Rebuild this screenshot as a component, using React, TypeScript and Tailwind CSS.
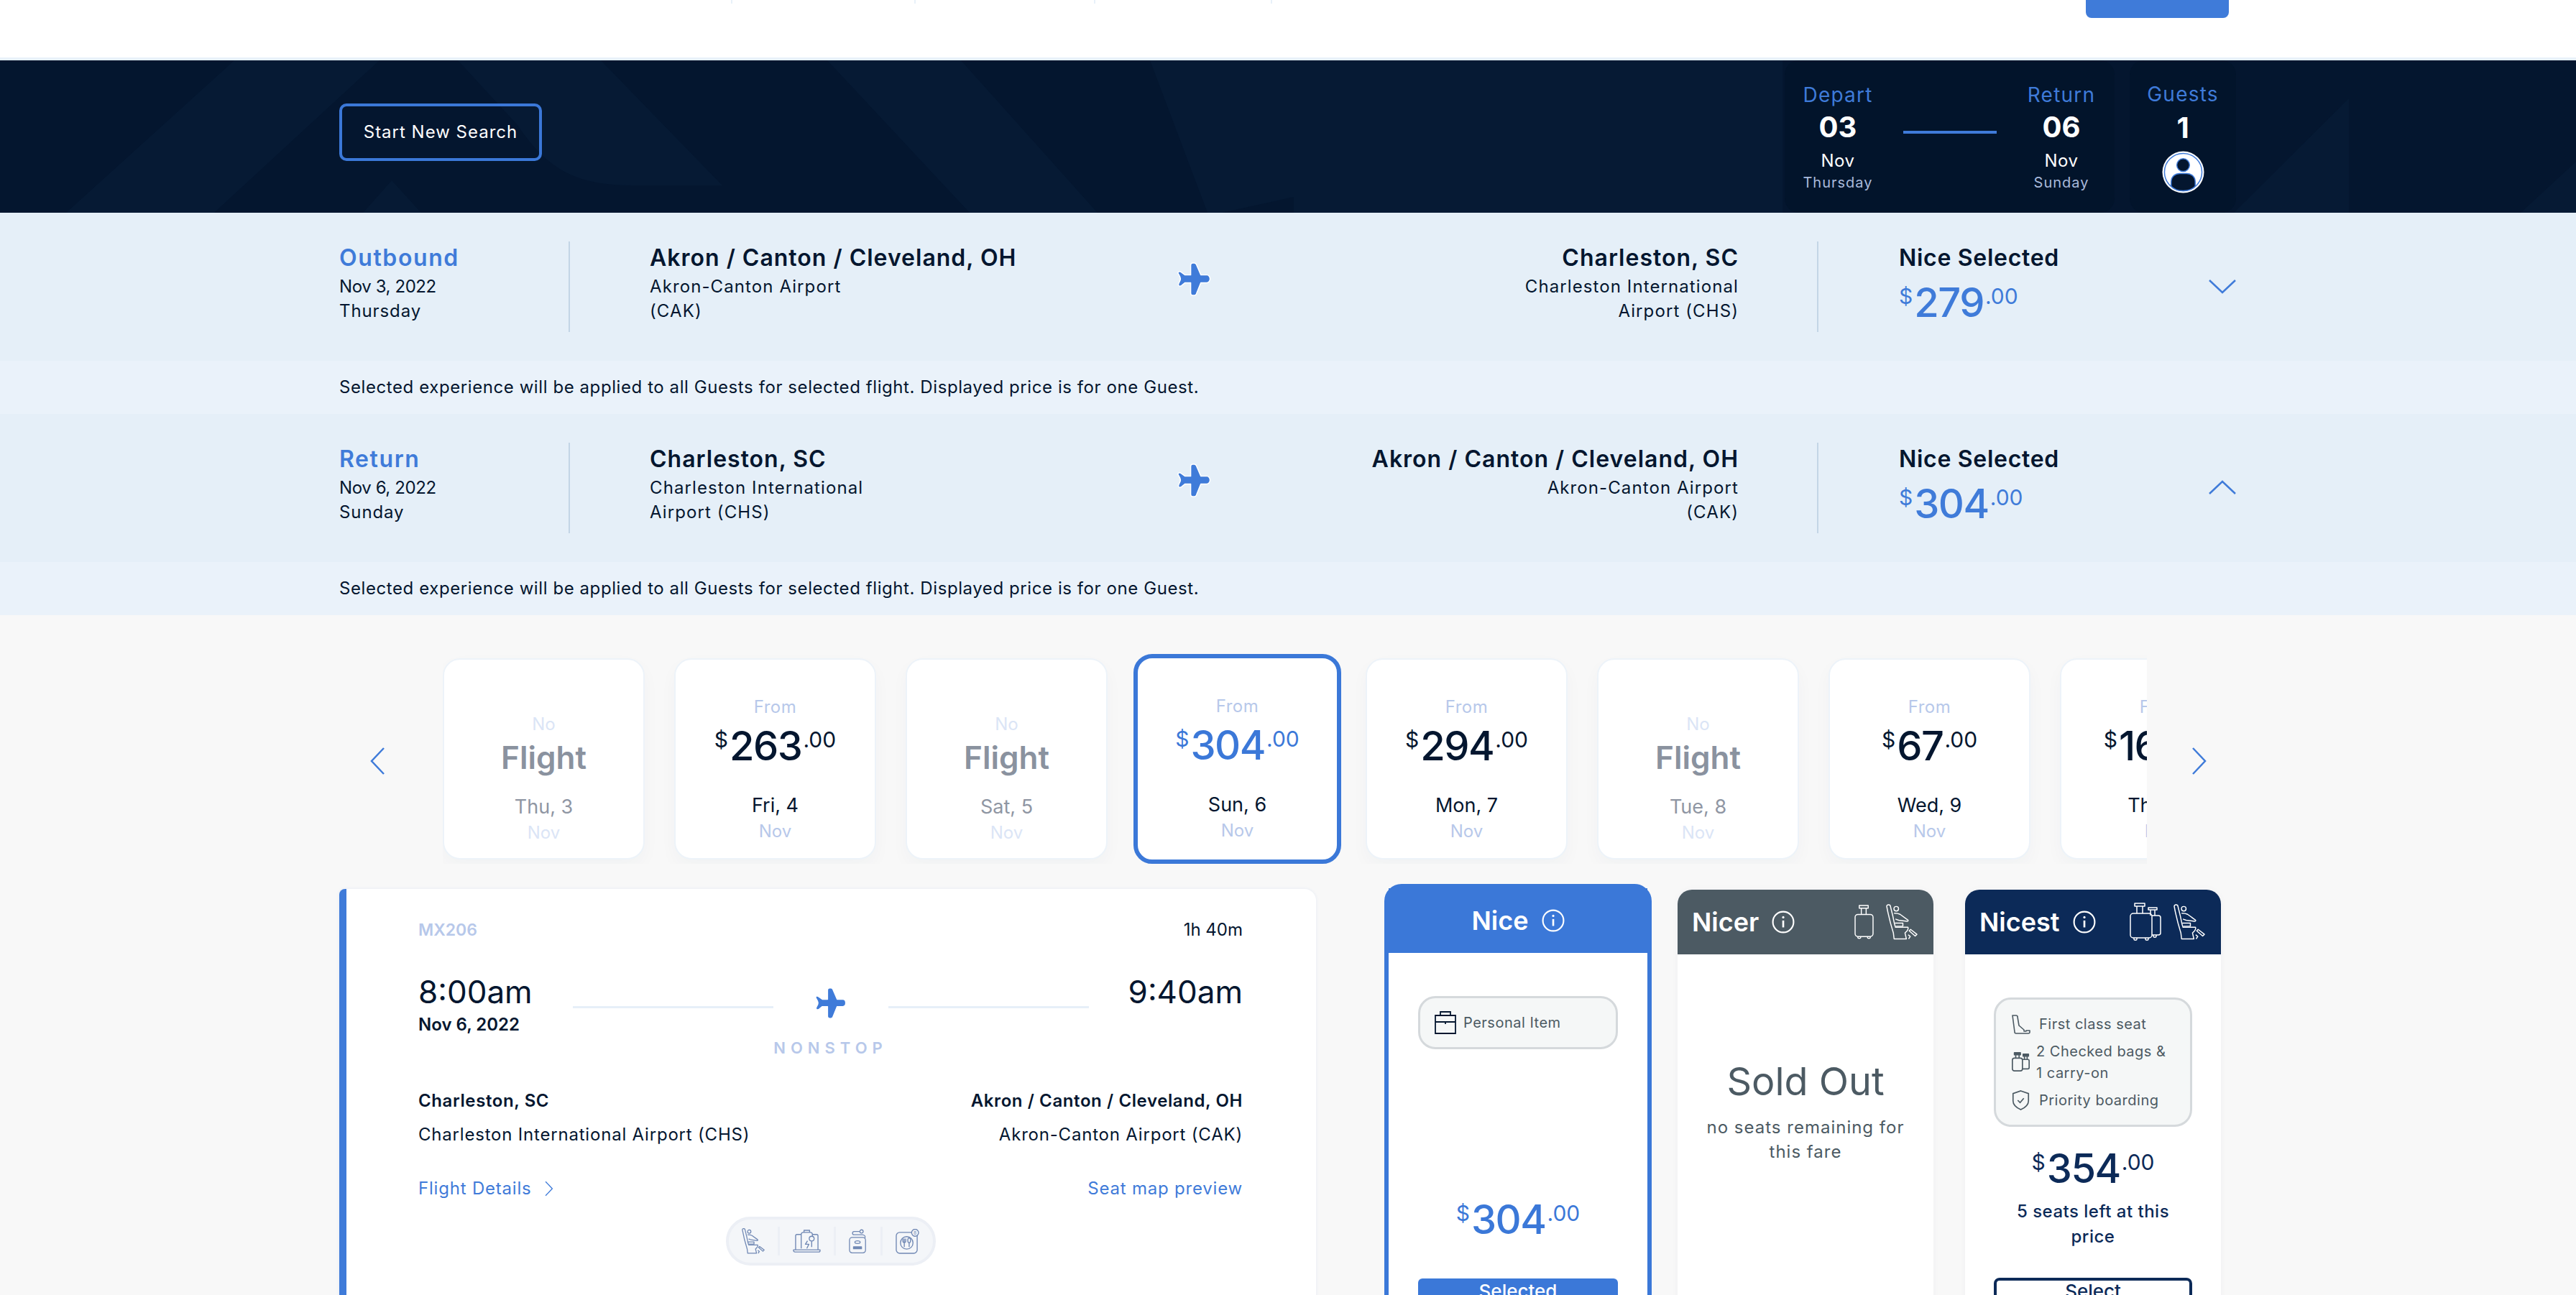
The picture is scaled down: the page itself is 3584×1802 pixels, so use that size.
import React from 'react';

const Plane = ({ className }: { className?: string }) => (
  <svg viewBox="-1 -1 48 48" className={className} fill="#3f7bd9" stroke="#fff" strokeWidth="1.500" strokeLinejoin="round">
    <path d="M18 3c0-2 1-3 3-3h2c1.500 0 2.500 1 3 2l6.500 15H41c2.500 0 4.500 2.500 4.500 5.500S43.500 28 41 28h-8.500L26 44c-.5 1-1.500 2-3 2h-2c-2 0-3-1-3-3V28h-8l-5 4c-2 1.500-4.500 1-4.500-1 0-3 3-5 3-8.500S0 16 0 14c0-2 2.500-2.500 4.500-1l5.500 4h8z" />
  </svg>
);

const Chevron = ({ dir, className }: { dir: 'left' | 'right' | 'up' | 'down'; className?: string }) => {
  const d = {
    left: 'M20 1 3 19l17 18',
    right: 'M2 1l17 18L2 37',
    up: 'M1 19 19 2l18 17',
    down: 'M1 2l18 17L37 2',
  }[dir];
  const box = dir === 'left' || dir === 'right' ? '0 0 22 38' : '0 0 38 21';
  return (
    <svg viewBox={box} className={className} fill="none" stroke="#3f7bd9" strokeWidth="2.500">
      <path d={d} />
    </svg>
  );
};

const Info = ({ className }: { className?: string }) => (
  <svg viewBox="0 0 30 30" className={className} fill="none" stroke="#fff" strokeWidth="2">
    <circle cx="15" cy="15" r="13.500" />
    <path d="M15 13v9" strokeWidth="2.500" />
    <circle cx="15" cy="8.800" r="1.500" fill="#fff" stroke="none" />
  </svg>
);

const Seat = ({ className, stroke = '#fff', width = 1.5 }: { className?: string; stroke?: string; width?: number }) => (
  <svg viewBox="0 0 45 51" className={className} fill="none" stroke={stroke} strokeWidth={width} strokeLinejoin="round" strokeLinecap="round">
    <path d="M1 3C1 1 4.500 0 6 2l3.500 14L12 28l1.500 5H31c1 0 .5 3-1 5l-3 3 2 8.500H11.500L10.500 41C7 30 3 14 1 3z" />
    <circle cx="14.600" cy="6.700" r="3.300" />
    <path d="M12 13c3 0 6 .5 8 1.500l11 8c1 1 .5 2-1 2l-12-1.500-4-1.500" />
    <path d="M13 27h11v4.500H14.500M35 36l9 7-2.500 2.500-8.500-7.500zM32 44l2.500 2-2 3" />
  </svg>
);

const Bag = ({ className }: { className?: string }) => (
  <svg viewBox="0 0 28 50" className={className} fill="none" stroke="#fff" strokeWidth="1.500" strokeLinejoin="round">
    <path d="M7 1h13v4H7zM10 5v9M17 5v9" />
    <rect x="1" y="14" width="26" height="32" rx="4" />
    <path d="M5 46v2c0 1 4 1 4 0v-2M19 46v2c0 1 4 1 4 0v-2" />
  </svg>
);

const TwoBags = ({ className }: { className?: string }) => (
  <svg viewBox="0 0 44 54" className={className} fill="none" stroke="#fff" strokeWidth="1.500" strokeLinejoin="round">
    <path d="M7 1h14v4H7zM10 5v10M18 5v10" />
    <rect x="1" y="15" width="30" height="34" rx="4" />
    <path d="M6 49v2c0 1.500 4 1.500 4 0v-2M22 49v2c0 1.500 4 1.500 4 0v-2" />
    <path d="M26 7h12v3H26zM29 10v8M35 10v8M31 18h9a3 3 0 0 1 3 3v21a3 3 0 0 1-3 3h-9M33 45v2c0 1.500 4 1.500 4 0v-2" />
  </svg>
);

const Money = ({ whole, className }: { whole: string; className: string }) => (
  <span className={`flex items-start justify-center whitespace-nowrap ${className}`}>
    <span className="text-[30px] leading-none mt-[6px]">$</span>
    <span className="text-[56px] leading-[60px] font-medium tracking-[-1.5px] mx-[2px]">{whole}</span>
    <span className="text-[30px] leading-none mt-[6px]">.00</span>
  </span>
);

const FlightRow = ({
  label, date, day, from, fromAirport, fromAirport2, to, toAirport, toAirport2, price, open,
}: {
  label: string; date: string; day: string; from: string; fromAirport: string; fromAirport2: string;
  to: string; toAirport: string; toAirport2: string; price: string; open: boolean;
}) => (
  <>
    <div className="bg-[#e5eff8] h-[206px] pl-[472px] pr-[473px] pt-[40px] flex items-start text-[#04162f]">
      <div className="w-[321px] h-[126px] border-r-2 border-[#c3d5e6]">
        <div className="text-[32px] leading-[46px] font-semibold text-[#3f7bd9] tracking-[1.6px]">{label}</div>
        <div className="text-[24px] leading-[34px] tracking-[-0.4px]">{date}</div>
        <div className="text-[24px] leading-[34px] tracking-[0.9px]">{day}</div>
      </div>
      <div className="w-[1737px] h-[126px] pl-[111px] pr-[109px] border-r-2 border-[#c3d5e6] flex justify-between items-start">
        <div className="w-[600px]">
          <div className="text-[32px] leading-[46px] font-semibold tracking-[1px]">{from}</div>
          <div className="text-[24px] leading-[34px] tracking-[1.100px]">{fromAirport}</div>
          <div className="text-[24px] leading-[34px] tracking-[1.100px]">{fromAirport2}</div>
        </div>
        <Plane className="w-[47px] h-[47px] mt-[29px] shrink-0" />
        <div className="w-[600px] text-right">
          <div className="text-[32px] leading-[46px] font-semibold tracking-[1px]">{to}</div>
          <div className="text-[24px] leading-[34px] tracking-[1.100px]">{toAirport}</div>
          <div className="text-[24px] leading-[34px] tracking-[1.100px]">{toAirport2}</div>
        </div>
      </div>
      <div className="flex-1 pl-[112px] flex justify-between items-start">
        <div>
          <div className="text-[32px] leading-[46px] font-semibold tracking-[0.7px]">Nice Selected</div>
          <Money whole={price} className="text-[#3f7bd9] w-fit mt-[9px]" />
        </div>
        <Chevron dir={open ? 'up' : 'down'} className="w-[38px] h-[21px] mt-[52px]" />
      </div>
    </div>
    <div className="bg-[#eaf2fa] h-[74px] pl-[472px] flex items-center text-[24px] text-[#04162f] tracking-[0.58px]">
      Selected experience will be applied to all Guests for selected flight. Displayed price is for one Guest.
    </div>
  </>
);

const dateCard = 'w-[281px] h-[280px] shrink-0 bg-white rounded-[24px] border-2 border-[#edf3f9] shadow-[0_10px_24px_rgba(30,50,90,0.03)] flex flex-col items-center';

const NoFlight = ({ day }: { day: string }) => (
  <div className={dateCard}>
    <div className="mt-[76px] text-[24px] leading-[28px] text-[#dbe5f6]">No</div>
    <div className="text-[44px] leading-[64px] font-semibold text-[#8a929f]">Flight</div>
    <div className="mt-[19px] text-[27px] leading-[36px] text-[#8f96a3]">{day}</div>
    <div className="mt-[4px] text-[24px] leading-[28px] text-[#dbe5f6]">Nov</div>
  </div>
);

const PriceCard = ({ whole, day }: { whole: string; day: string }) => (
  <div className={dateCard}>
    <div className="mt-[52px] text-[24px] leading-[28px] tracking-[0.5px] text-[#b7c8ea]">From</div>
    <Money whole={whole} className="text-[#04162f] mt-[10px]" />
    <div className="mt-[35px] text-[27px] leading-[36px] text-[#04162f] whitespace-nowrap">{day}</div>
    <div className="mt-[4px] text-[24px] leading-[28px] text-[#b7c8ea]">Nov</div>
  </div>
);

const FareHeader = ({ name, bg, children }: { name: string; bg: string; children: React.ReactNode }) => (
  <div className={`h-[90px] rounded-t-[20px] pl-[20px] pr-[22px] flex items-center justify-between ${bg}`}>
    <div className="flex items-center gap-[18px] text-[36px] font-semibold text-white">
      {name}
      <Info className="w-[32px] h-[32px]" />
    </div>
    <div className="flex items-center gap-[17px]">{children}</div>
  </div>
);

export default function App() {
  return (
    <div className="w-[3584px] h-[1802px] overflow-hidden bg-[#f8f8f8] font-['Inter',sans-serif] text-[#04162f]">
      {/* top nav, scrolled almost out of view */}
      <div className="h-[80px] bg-white flex items-start pl-[1017px]">
        <div className="w-[255px] h-[5px] border-l-2 border-[#e8f1f9]" />
        <div className="w-[250px] h-[5px] border-l-2 border-[#e8f1f9]" />
        <div className="w-[246px] h-[5px] border-l-2 border-[#e8f1f9]" />
        <div className="w-[2px] h-[5px] bg-[#e8f1f9]" />
        <div className="ml-[1132px] w-[199px] h-[25px] bg-[#3f7bd9] rounded-b-[8px]" />
      </div>
      <div className="h-[4px] bg-[#e8f1f9]" />

      {/* navy search summary */}
      <div className="relative h-[212px] bg-[#04162f] pl-[472px] pr-[473px] flex items-center justify-between overflow-hidden">
        <svg className="absolute inset-0 w-full h-full" viewBox="0 0 3584 212" preserveAspectRatio="none" fill="#061a34">
          <path d="M326 0h202L298 212H92zM505 212l40-45 41 45zM637 0h199l169 174H880C800 174 760 150 720 90zM1151 0h186l190 212h-178zM1600 0h200v190l-100 22h-20zM1800 0h680v212h-680zM3108 212 3268 53v159zM3507 212l77-71v71z" />
        </svg>
        <button className="relative w-[282px] h-[80px] mb-[12px] border-4 border-[#3b78d8] rounded-[10px] text-white text-[24px] tracking-[1px]">
          Start New Search
        </button>
        <div className="relative flex gap-[21px] h-full">
          <div className="w-[459px] bg-[#02142b] rounded-[20px] px-[24px] flex items-center justify-between">
            <div className="w-[100px] flex flex-col items-center">
              <span className="text-[28px] leading-[40px] text-[#3f7bd9] tracking-[1.2px]">Depart</span>
              <span className="text-[40px] leading-[50px] font-bold text-white">03</span>
              <span className="mt-[6px] text-[24px] leading-[32px] text-white tracking-[0.5px]">Nov</span>
              <span className="text-[20px] leading-[28px] text-[#a9badb] tracking-[1px]">Thursday</span>
            </div>
            <div className="w-[130px] h-[4px] bg-[#3f7bd9] mb-[12px]" />
            <div className="w-[100px] flex flex-col items-center">
              <span className="text-[28px] leading-[40px] text-[#3f7bd9] tracking-[1.2px]">Return</span>
              <span className="text-[40px] leading-[50px] font-bold text-white">06</span>
              <span className="mt-[6px] text-[24px] leading-[32px] text-white tracking-[0.5px]">Nov</span>
              <span className="text-[20px] leading-[28px] text-[#a9badb] tracking-[1px]">Sunday</span>
            </div>
          </div>
          <div className="w-[148px] bg-[#02142b] rounded-[20px] flex flex-col items-center pt-[27px]">
            <span className="text-[28px] leading-[40px] text-[#3f7bd9] tracking-[1.2px]">Guests</span>
            <span className="mt-[2px] text-[40px] leading-[50px] font-bold text-white">1</span>
            <svg viewBox="0 0 60 60" className="w-[59px] h-[59px] mt-[7px]">
              <circle cx="30" cy="30" r="29.500" fill="#fff" />
              <circle cx="30" cy="30" r="26.500" fill="#fff" stroke="#3f7bd9" strokeWidth="1.500" />
              <circle cx="30" cy="20" r="9" fill="#04162f" stroke="#3f7bd9" strokeWidth="1.500" />
              <path d="M13 50V44c0-8 6-12 12-12h10c6 0 12 4 12 12v6c-5 5-11 6.500-17 6.500S18 55 13 50z" fill="#04162f" stroke="#3f7bd9" strokeWidth="1.500" />
            </svg>
          </div>
        </div>
      </div>

      <FlightRow
        label="Outbound" date="Nov 3, 2022" day="Thursday"
        from="Akron / Canton / Cleveland, OH" fromAirport="Akron-Canton Airport" fromAirport2="(CAK)"
        to="Charleston, SC" toAirport="Charleston International" toAirport2="Airport (CHS)"
        price="279" open={false}
      />
      <FlightRow
        label="Return" date="Nov 6, 2022" day="Sunday"
        from="Charleston, SC" fromAirport="Charleston International" fromAirport2="Airport (CHS)"
        to="Akron / Canton / Cleveland, OH" toAirport="Akron-Canton Airport" toAirport2="(CAK)"
        price="304" open
      />

      {/* date carousel */}
      <div className="pl-[514px] pt-[54px] flex items-center h-[346px]">
        <Chevron dir="left" className="w-[22px] h-[38px] mt-[6px] shrink-0" />
        <div className="ml-[80px] w-[2371px] h-[292px] overflow-hidden flex items-center gap-[41px]">
          <NoFlight day="Thu, 3" />
          <PriceCard whole="263" day="Fri, 4" />
          <NoFlight day="Sat, 5" />
          <div className="w-[289px] h-[292px] shrink-0 -ml-[5px] -mr-[7px] bg-white rounded-[26px] border-[6px] border-[#3b78d8] flex flex-col items-center">
            <div className="mt-[53px] text-[24px] leading-[28px] tracking-[0.5px] text-[#b7c8ea]">From</div>
            <Money whole="304" className="text-[#3b78d8] mt-[10px]" />
            <div className="mt-[35px] text-[27px] leading-[36px]">Sun, 6</div>
            <div className="mt-[4px] text-[24px] leading-[28px] text-[#b7c8ea]">Nov</div>
          </div>
          <PriceCard whole="294" day="Mon, 7" />
          <NoFlight day="Tue, 8" />
          <PriceCard whole="67" day="Wed, 9" />
          <PriceCard whole="164" day="Thu, 10" />
        </div>
        <Chevron dir="right" className="w-[22px] h-[38px] mt-[6px] ml-[62px] shrink-0" />
      </div>

      {/* flight card + fares */}
      <div className="pl-[472px] mt-[28px] flex items-start">
        <div className="w-[1359px] h-[600px] mt-[7px] bg-white border-l-[10px] border-[#3f7bd9] rounded-tl-[8px] rounded-tr-[16px] shadow-[0_0_4px_rgba(60,120,210,0.10)] pl-[100px] pr-[102px] pt-[42px]">
          <div className="flex justify-between items-center h-[30px]">
            <span className="text-[23px] font-semibold text-[#b7c8ea]">MX206</span>
            <span className="text-[24px]">1h 40m</span>
          </div>
          <div className="mt-[40px] flex justify-between items-start">
            <div className="w-[215px]">
              <div className="text-[44px] leading-[62px]">8:00am</div>
              <div className="text-[24px] leading-[34px] font-semibold -mt-[2px]">Nov 6, 2022</div>
            </div>
            <div className="flex-1 flex flex-col items-center">
              <div className="flex items-center justify-center w-full pt-[25px]">
                <div className="w-[279px] h-[3px] bg-[#e6eff8] mt-[10px]" />
                <Plane className="w-[44px] h-[44px] mx-[58px]" />
                <div className="w-[279px] h-[3px] bg-[#e6eff8] mt-[10px]" />
              </div>
              <div className="mt-[25px] text-[22px] leading-[30px] font-semibold text-[#b7c8ea] tracking-[7px]">NONSTOP</div>
            </div>
            <div className="w-[215px] text-right text-[44px] leading-[62px]">9:40am</div>
          </div>
          <div className="mt-[42px] flex justify-between text-[24px] leading-[34px] font-semibold tracking-[0.6px]">
            <span>Charleston, SC</span>
            <span>Akron / Canton / Cleveland, OH</span>
          </div>
          <div className="mt-[13px] flex justify-between text-[24px] leading-[34px] tracking-[0.8px]">
            <span>Charleston International Airport (CHS)</span>
            <span>Akron-Canton Airport (CAK)</span>
          </div>
          <div className="mt-[41px] flex justify-between items-center text-[24px] leading-[34px] tracking-[0.8px] text-[#3f7bd9]">
            <span className="flex items-center gap-[18px]">
              Flight Details
              <Chevron dir="right" className="w-[12px] h-[22px]" />
            </span>
            <span>Seat map preview</span>
          </div>
          {/* amenities pill */}
          <div className="mt-[22px] mx-auto w-[292px] h-[68px] rounded-full bg-[#f4f6f9] border-4 border-[#eceff5] flex items-center justify-between px-[18px]">
            <Seat className="w-[32px] h-[36px]" stroke="#7088b4" width={1.8} />
            <div className="w-[3px] h-[40px] bg-[#eceff5]" />
            <svg viewBox="0 0 40 36" className="w-[39px] h-[35px]" fill="none" stroke="#7088b4" strokeWidth="1.400" strokeLinejoin="round">
              <path d="M4 30V10a2 2 0 0 1 2-2h6M28 8h6a2 2 0 0 1 2 2v20M1 30h38v1a2 2 0 0 1-2 2H3a2 2 0 0 1-2-2z" />
              <path d="M12 28V8a3 3 0 0 1 3-3h10a3 3 0 0 1 3 3v3M16 5V2h8v3M21 17l-3 5h5l-3 6" />
              <circle cx="27" cy="14" r="3.500" />
              <path d="M27 18v8" />
            </svg>
            <div className="w-[3px] h-[40px] bg-[#eceff5]" />
            <svg viewBox="0 0 28 36" className="w-[26px] h-[35px]" fill="none" stroke="#7088b4" strokeWidth="1.400" strokeLinejoin="round">
              <rect x="1" y="12" width="24" height="23" rx="4" />
              <ellipse cx="13" cy="19" rx="4" ry="2" />
              <path d="M7 26h12v3H7z" fill="#7088b4" />
              <path d="M24 14c2-4-1-6-4-6H8a2.500 2.500 0 0 1 0-5h8" />
              <circle cx="19" cy="3" r="2.500" />
            </svg>
            <div className="w-[3px] h-[40px] bg-[#eceff5]" />
            <svg viewBox="0 0 34 36" className="w-[33px] h-[35px]" fill="none" stroke="#7088b4" strokeWidth="1.400" strokeLinejoin="round">
              <rect x="1" y="5" width="30" height="30" rx="5" />
              <circle cx="16" cy="20" r="9" />
              <path d="M12.500 14v12M10.500 14v3.500c0 1 1 2 2 2s2-1 2-2V14M19.500 20v6" />
              <ellipse cx="19.500" cy="16.500" rx="2" ry="3.500" />
              <circle cx="28" cy="5.500" r="5" fill="#f4f6f9" />
              <text x="28" y="8" textAnchor="middle" fontSize="7" fill="#7088b4" stroke="none">8</text>
            </svg>
          </div>
        </div>

        {/* fares */}
        <div className="ml-[95px] w-[372px] h-[600px] shrink-0 rounded-t-[24px] border-[6px] border-[#3b78d8] bg-white flex flex-col">
          <div className="bg-[#3b78d8] h-[90px] shrink-0 flex items-center justify-center gap-[18px] text-[36px] font-semibold text-white">
            Nice
            <Info className="w-[32px] h-[32px]" />
          </div>
          <div className="mx-[41px] mt-[60px] h-[74px] shrink-0 rounded-[24px] bg-[#f5f7f7] border-[3px] border-[#d5d9dc] flex items-center pl-[20px] gap-[10px] text-[20px] tracking-[0.5px] text-[#4c5a63]">
            <svg viewBox="0 0 30 32" className="w-[30px] h-[32px]" fill="none" stroke="#04162f" strokeWidth="1.800">
              <path d="M8 6V1h14v5M1 6h28v25H1zM1 15h28M15 15v3" />
            </svg>
            Personal Item
          </div>
          <Money whole="304" className="text-[#3b78d8] mt-[207px] shrink-0" />
          <div className="mx-[41px] mt-[52px] h-[60px] shrink-0 rounded-t-[6px] bg-[#3b78d8] text-white text-[26px] leading-[36px] font-medium text-center">Selected</div>
        </div>

        <div className="ml-[36px] w-[356px] h-[600px] mt-[8px] shrink-0 bg-white shadow-[0_0_10px_rgba(30,50,90,0.04)] rounded-t-[20px] flex flex-col">
          <FareHeader name="Nicer" bg="bg-[#4c5a63]">
            <Bag className="w-[27px] h-[48px]" />
            <Seat className="w-[44px] h-[50px]" />
          </FareHeader>
          <div className="mt-[142px] text-center text-[54px] leading-[70px] text-[#4c5a63]">Sold Out</div>
          <div className="mt-[12px] mx-[30px] text-center text-[24px] leading-[34px] tracking-[1px] text-[#4c5a63]">no seats remaining for this fare</div>
        </div>

        <div className="ml-[44px] w-[356px] h-[600px] mt-[8px] shrink-0 bg-white shadow-[0_0_10px_rgba(30,50,90,0.04)] rounded-t-[20px] flex flex-col items-stretch">
          <FareHeader name="Nicest" bg="bg-[#0c2a58]">
            <TwoBags className="w-[44px] h-[54px]" />
            <Seat className="w-[44px] h-[50px]" />
          </FareHeader>
          <div className="mx-[40px] mt-[60px] h-[180px] shrink-0 rounded-[24px] bg-[#f5f7f7] border-[3px] border-[#d5d9dc] pl-[21px] flex flex-col justify-center gap-[8px] text-[20px] leading-[30px] tracking-[0.5px] text-[#4c5a63]">
            <div className="flex items-center gap-[12px]">
              <svg viewBox="0 0 27 27" className="w-[27px] h-[27px] shrink-0" fill="none" stroke="#4c5a63" strokeWidth="1.600" strokeLinejoin="round">
                <path d="M2 1h5c1.500 0 2 1 2 2l2 12 7 6v2h3v-1h5v2c0 1-1 2-2 2H7c-1 0-2-.5-2-2z" />
              </svg>
              First class seat
            </div>
            <div className="flex items-center gap-[8px]">
              <svg viewBox="0 0 27 30" className="w-[27px] h-[28px] shrink-0" fill="none" stroke="#4c5a63" strokeWidth="1.800" strokeLinejoin="round">
                <rect x="1" y="9" width="15" height="19" rx="3" />
                <path d="M16 11h8a2 2 0 0 1 2 2v10a2 2 0 0 1-2 2h-8" />
                <path d="M4 1h9v3H4zM6 4v5M11 4v5M17 3h8v3h-8zM19 6v5M23 6v5" fill="#4c5a63" />
              </svg>
              <div>2 Checked bags &amp;<br />1 carry-on</div>
            </div>
            <div className="flex items-center gap-[12px]">
              <svg viewBox="0 0 27 30" className="w-[27px] h-[28px] shrink-0" fill="none" stroke="#4c5a63" strokeWidth="1.800">
                <path d="M13.500 1 25 5v11c0 6-5 10-11.500 13C7 26 2 22 2 16V5zM9 15l3.500 3.500L18 12" />
              </svg>
              Priority boarding
            </div>
          </div>
          <Money whole="354" className="text-[#0c2a58] mt-[28px] shrink-0" />
          <div className="mt-[12px] text-center text-[24px] leading-[35px] font-medium tracking-[0.5px] text-[#0c2a58]">5 seats left at this<br />price</div>
          <div className="mx-[40px] mt-[40px] h-[60px] shrink-0 rounded-t-[8px] border-4 border-[#0c2a58] text-[#0c2a58] text-[26px] leading-[30px] font-medium text-center">Select</div>
        </div>
      </div>
    </div>
  );
}
